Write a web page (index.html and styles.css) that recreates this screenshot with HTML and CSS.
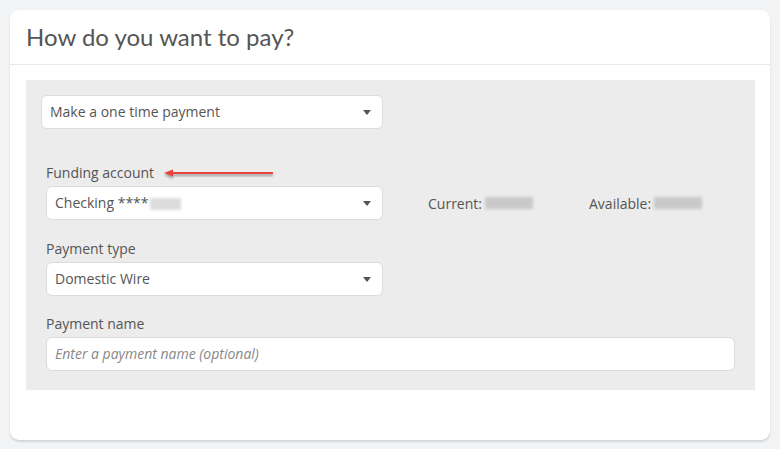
FILE: index.html
```html
<!DOCTYPE html>
<html>
<head>
<meta charset="utf-8">
<link rel="stylesheet" href="styles.css">
</head>
<body>
<div class="card">
  <div class="card-header">
    <h1 class="title">How do you want to pay?</h1>
  </div>
  <div class="card-body">
    <div class="panel">
      <div class="select select-wide">
        <span>Make a one time payment</span>
        <span class="caret"></span>
      </div>
      <div class="fields">
        <div class="field">
          <div class="label-row">
            <label class="label">Funding account</label>
            <svg class="pointer" width="114" height="12" viewBox="0 0 114 12">
              <defs>
                <filter id="sh" x="-10%" y="-100%" width="120%" height="300%">
                  <feDropShadow dx="0" dy="2" stdDeviation="1.2" flood-color="#000" flood-opacity="0.35"/>
                </filter>
              </defs>
              <g filter="url(#sh)">
                <line x1="6" y1="5" x2="110" y2="5" stroke="#e8453c" stroke-width="2"/>
                <path d="M1 5 L10 1.5 L10 8.5 Z" fill="#e8453c"/>
              </g>
            </svg>
          </div>
          <div class="row">
            <div class="select">
              <span>Checking ****<span class="blur blur-acct"></span></span>
              <span class="caret"></span>
            </div>
            <div class="balance balance-current">Current: <span class="blur blur-amt"></span></div>
            <div class="balance">Available:<span class="blur blur-amt"></span></div>
          </div>
        </div>
        <div class="field field-type">
          <label class="label">Payment type</label>
          <div class="select">
            <span>Domestic Wire</span>
            <span class="caret"></span>
          </div>
        </div>
        <div class="field">
          <label class="label">Payment name</label>
          <div class="input"><span class="placeholder">Enter a payment name (optional)</span></div>
        </div>
      </div>
    </div>
  </div>
</div>
</body>
</html>
```

FILE: styles.css
```css
* { box-sizing: border-box; }
html, body { margin: 0; padding: 0; }
body {
  background: #f2f3f5;
  font-family: "Open Sans", "Liberation Sans", sans-serif;
  color: #555;
  padding: 10px;
  height: 449px;
}
.card {
  width: 760px;
  height: 430px;
  background: #fff;
  border-radius: 9px;
  box-shadow: 0 2px 2px rgba(0,0,0,0.12), 0 0 1px rgba(0,0,0,0.06);
}
.card-header {
  height: 55px;
  border-bottom: 1px solid #e9e9e9;
  padding: 0 16px;
  display: flex;
  align-items: center;
}
.title {
  margin: 0;
  font-family: Lato, "Open Sans", sans-serif;
  font-weight: 400;
  font-size: 24px;
  color: #555;
  padding-bottom: 1px;
}
.card-body {
  padding: 15px 15px 0 16px;
}
.panel {
  background: #ececec;
  height: 310px;
  padding: 15px 20px 20px 15px;
}
.select {
  width: 337px;
  height: 34px;
  background: #fff;
  border: 1px solid #dcdcdc;
  border-radius: 6px;
  display: flex;
  align-items: center;
  justify-content: space-between;
  padding: 0 11px 1px 8px;
  font-size: 14px;
  color: #555;
}
.select-wide { width: 342px; }
.caret {
  width: 0; height: 0;
  border-left: 4.5px solid transparent;
  border-right: 4.5px solid transparent;
  border-top: 5px solid #555;
  margin-top: 2px;
}
.fields {
  padding-left: 5px;
  margin-top: 34px;
  display: flex;
  flex-direction: column;
  gap: 18px;
}
.field { display: flex; flex-direction: column; gap: 3px; }
.field-type { margin-top: 1px; }
.label-row { display: flex; align-items: center; height: 20px; }
.label {
  font-size: 14px;
  line-height: 20px;
  color: #555;
}
.pointer { margin-left: 9px; margin-top: 1px; }
.row { display: flex; align-items: center; }
.balance {
  font-size: 14px;
  color: #555;
  display: flex;
  align-items: center;
}
.balance-current { margin-left: 45px; width: 161px; }
.blur {
  display: inline-block;
  background: #c9c9c9;
  filter: blur(1.5px);
  height: 12px;
  vertical-align: middle;
}
.blur-acct { width: 31px; margin-left: 1px; background: #dcdcdc; }
.blur-amt { width: 48px; margin-left: 3px; }
.input {
  width: 689px;
  height: 34px;
  background: #fff;
  border: 1px solid #dcdcdc;
  border-radius: 6px;
  display: flex;
  align-items: center;
  padding: 0 8px 1px;
}
.placeholder {
  font-style: italic;
  font-size: 14px;
  color: #888;
}
```
